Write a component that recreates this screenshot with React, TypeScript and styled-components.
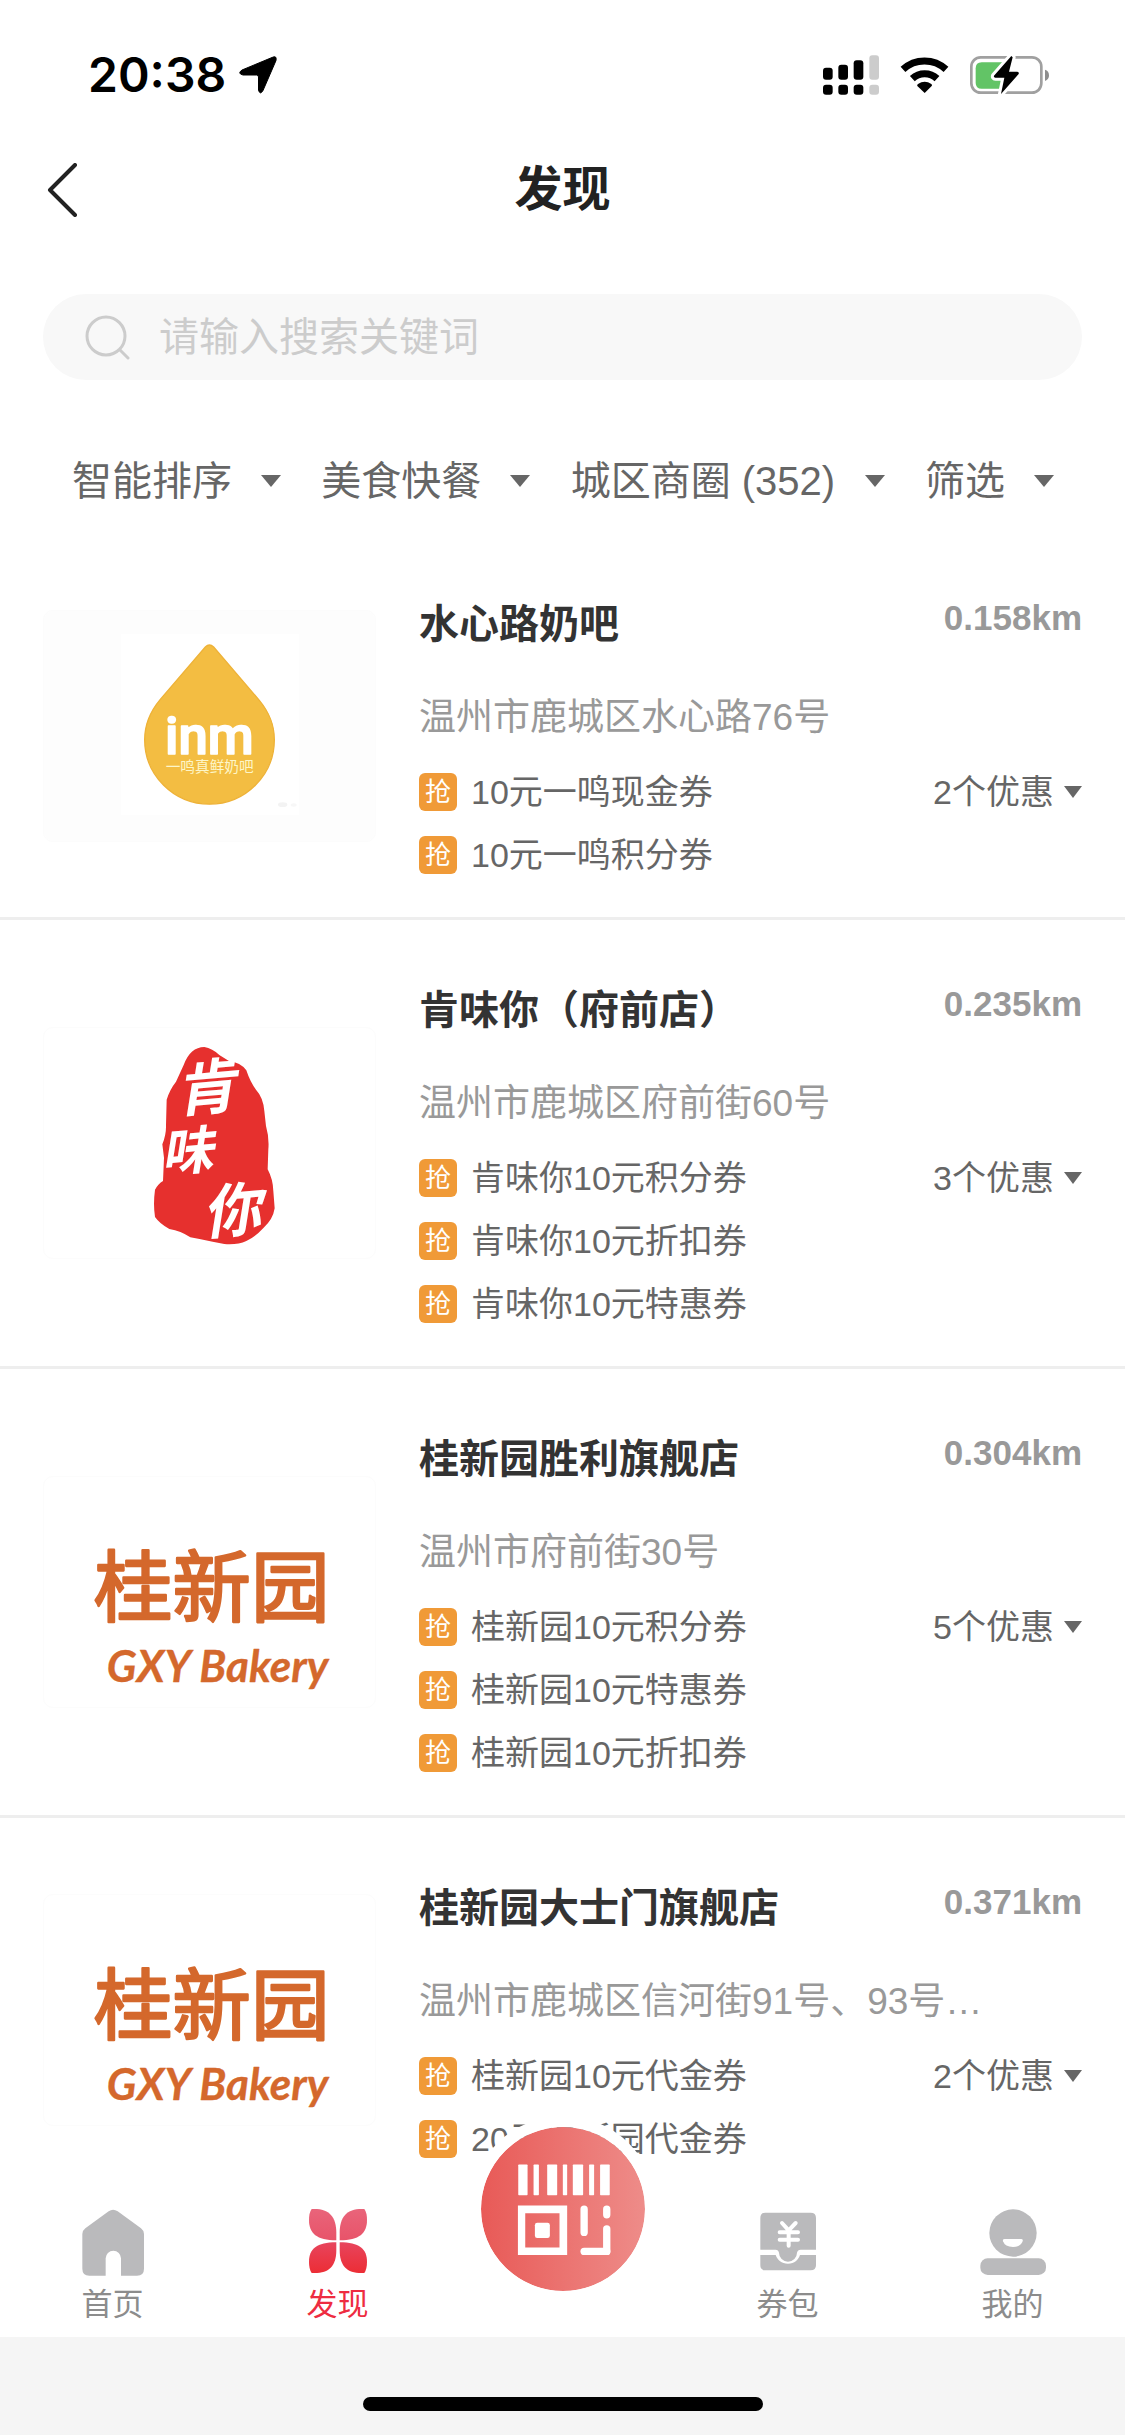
import React, { useState } from "react";
import styled, { createGlobalStyle } from "styled-components";

const sans = `"Liberation Sans", "Noto Sans CJK SC", sans-serif`;

const GlobalStyle = createGlobalStyle`
  * { box-sizing: border-box; }
  body { margin: 0; background: #fff; font-family: ${sans}; color: #666; }
  button, input, select { font: inherit; color: inherit; border: 0; padding: 0; margin: 0; background: none; }
  ul { list-style: none; margin: 0; padding: 0; }
  h1, h2, p { margin: 0; }
  svg { display: block; flex: none; }
`;

const Page = styled.div`
  display: flex;
  flex-direction: column;
  height: 100vh;
  overflow: hidden;
  background: #fff;
`;

const StatusBar = styled.div`
  display: flex;
  align-items: center;
  justify-content: space-between;
  height: 132px;
  flex: none;
  padding: 18px 75px 0 88px;
  color: #000;
`;

const StatusGroup = styled.div<{ $gap: number }>`
  display: flex;
  align-items: center;
  gap: ${(p) => p.$gap}px;
`;

const Clock = styled.span`
  font: 600 48px/56px Inter, sans-serif;
`;

const NavBar = styled.header`
  display: grid;
  grid-template-columns: 80px 1fr 80px;
  align-items: center;
  height: 116px;
  flex: none;
  padding: 0 39px;
`;

const BackButton = styled.button`
  display: flex;
  padding: 8px;
  width: 48px;
`;

const PageTitle = styled.h1`
  font-size: 48px;
  line-height: 64px;
  font-weight: 700;
  text-align: center;
  color: #222;
`;

const SearchBox = styled.label`
  display: flex;
  align-items: center;
  gap: 28px;
  flex: none;
  height: 86px;
  margin: 46px 43px 48px;
  padding: 0 42px;
  border-radius: 43px;
  background: #f8f8f8;
`;

const SearchInput = styled.input`
  flex: 1;
  min-width: 0;
  font-size: 40px;
  line-height: 60px;
  outline: 0;
  &::placeholder { color: #ccc; opacity: 1; }
`;

const FilterBar = styled.div`
  display: flex;
  align-items: center;
  justify-content: space-between;
  flex: none;
  height: 106px;
  padding: 0 71px 0 72px;
`;

const Filter = styled.label`
  display: flex;
  align-items: center;
  gap: 29px;
`;

const FilterSelect = styled.select`
  appearance: none;
  font-size: 40px;
  line-height: 60px;
  outline: 0;
`;

const StoreList = styled.ul`
  flex: 1;
  min-height: 0;
  overflow: hidden;
`;

const StoreRow = styled.li`
  display: flex;
  align-items: center;
  gap: 43px;
  padding: 60px 43px 38px;
  border-bottom: 3px solid #eee;
`;

const Thumb = styled.div`
  flex: none;
  width: 333px;
  height: 232px;
  margin: -20px 0 2px;
  border: 1px solid #fcfcfc;
  border-radius: 10px;
  overflow: hidden;
`;

const StoreInfo = styled.div`
  flex: 1;
  min-width: 0;
`;

const StoreHead = styled.div`
  display: flex;
  justify-content: space-between;
`;

const StoreName = styled.h2`
  font-size: 40px;
  line-height: 60px;
  font-weight: 700;
  color: #333;
`;

const Distance = styled.span`
  font-size: 35px;
  line-height: 48px;
  font-weight: 700;
  color: #999;
`;

const Address = styled.p`
  margin-top: 36px;
  font-size: 37px;
  line-height: 56px;
  color: #999;
  white-space: nowrap;
  overflow: hidden;
  text-overflow: ellipsis;
`;

const Offers = styled.div`
  display: flex;
  align-items: flex-start;
  justify-content: space-between;
  margin-top: 22px;
`;

const CouponList = styled.ul`
  display: grid;
  gap: 15px;
`;

const Coupon = styled.li`
  display: flex;
  align-items: center;
  gap: 14px;
  font-size: 34px;
  line-height: 48px;
`;

const Badge = styled.span`
  display: flex;
  align-items: center;
  justify-content: center;
  width: 38px;
  height: 38px;
  border-radius: 6px;
  background: #f09a37;
  color: #fff;
  font-size: 26px;
  line-height: 36px;
`;

const MoreButton = styled.button`
  display: flex;
  align-items: center;
  gap: 10px;
  font-size: 34px;
  line-height: 48px;
`;

const TabBar = styled.nav`
  display: grid;
  grid-template-columns: repeat(5, 1fr);
  justify-items: center;
  flex: none;
  height: 147px;
  background: #fff;
`;

const Tab = styled.a<{ $active?: boolean }>`
  display: flex;
  flex-direction: column;
  align-items: center;
  gap: 8px;
  padding-top: 17px;
  font-size: 31px;
  line-height: 36px;
  text-decoration: none;
  color: ${(p) => (p.$active ? "#ee2c41" : "#8c8c8c")};
`;

const ScanButton = styled.button`
  display: flex;
  position: relative;
  width: 186px;
  height: 186px;
  margin-top: -74px;
  border: 11px solid #fff;
  border-radius: 50%;
  background: linear-gradient(90deg, #e85a57, #ee8c89) padding-box;
`;

const HomeArea = styled.div`
  display: flex;
  justify-content: center;
  flex: none;
  height: 98px;
  padding-top: 60px;
  background: #f5f5f5;
`;

const HomeIndicator = styled.div`
  width: 400px;
  height: 14px;
  border-radius: 7px;
  background: #000;
`;

const Caret = ({ w = 20 }: { w?: number }) => (
  <svg width={w} height="12" viewBox="0 0 20 12" preserveAspectRatio="none" aria-hidden="true">
    <path d="M0 0H20L10 12Z" fill="#666" />
  </svg>
);

const DropLogo = () => (
  <svg width="333" height="232" viewBox="129 150 999 696" role="img" aria-label="inm">
    <rect x="129" y="150" width="999" height="696" fill="#fdfdfd" />
    <rect x="360" y="218" width="534" height="545" fill="#fff" />
    <path
      d="M613 258Q625 246 638 258L775 418C806 456 820 490 820 536A194 193 0 0 1 431 536C431 490 447 452 478 415Z"
      fill="#f3bd42" stroke="#eeb238" strokeWidth="4"
    />
    <text textAnchor="middle" fill="#fff">
      <tspan x="625" y="578" fontFamily="Roboto, sans-serif" fontWeight="500" fontSize="158" stroke="#fff" strokeWidth="5" strokeLinejoin="round">inm</tspan>
      <tspan x="626" y="634" fontFamily='"Noto Sans CJK SC", sans-serif' fontSize="44" fill="#fdf6c8">一鸣真鲜奶吧</tspan>
    </text>
    <ellipse cx="845" cy="731" rx="14" ry="7" fill="#f3f3f3" />
    <ellipse cx="878" cy="732" rx="9" ry="5" fill="#f7f7f7" />
  </svg>
);

const SealLogo = () => (
  <svg width="333" height="232" viewBox="-171 81 999 696" role="img" aria-label="肯味你">
    <path
      d="M310 138Q334 142 355 162L385 181Q418 184 436 208Q448 244 465 266Q487 290 490 330L495 375Q505 410 502 445L500 505Q516 535 517 570L521 622Q516 655 488 680Q462 708 436 720Q410 732 370 729L335 722Q300 715 268 709Q240 690 205 684Q176 668 162 648Q156 610 162 566Q172 548 186 540L189 470L184 430Q196 400 195 372L197 296Q206 266 225 242L248 192Q268 138 310 138Z"
      fill="#e6302e"
    />
    <g fontFamily='"Noto Sans CJK SC", sans-serif' fontWeight="700" fontStyle="italic" fill="#fff" textAnchor="middle">
      <text x="312" y="324" fontSize="180" transform="rotate(-5 330 250)">肯</text>
      <text x="256" y="506" fontSize="156" transform="rotate(-5 270 440)">味</text>
      <text x="390" y="692" fontSize="176" transform="rotate(-5 400 620)">你</text>
    </g>
  </svg>
);

const BakeryLogo = () => (
  <svg width="333" height="232" viewBox="-51 -12 999 696" role="img" aria-label="桂新园 GXY Bakery">
    <g fill="#d4682c" stroke="#d4682c" strokeLinejoin="round" textAnchor="middle">
      <text x="452" y="406" fontFamily='"Noto Sans CJK SC", sans-serif' fontSize="236" strokeWidth="7">桂新园</text>
      <text x="470" y="604" fontFamily="Lato, sans-serif" fontStyle="italic" fontWeight="700" fontSize="132">GXY Bakery</text>
    </g>
  </svg>
);

type Store = { name: string; km: string; address: string; coupons: string[]; total: number; logo: () => React.ReactElement };

const stores: Store[] = [
  { name: "水心路奶吧", km: "0.158km", address: "温州市鹿城区水心路76号", coupons: ["10元一鸣现金券", "10元一鸣积分券"], total: 2, logo: DropLogo },
  { name: "肯味你（府前店）", km: "0.235km", address: "温州市鹿城区府前街60号", coupons: ["肯味你10元积分券", "肯味你10元折扣券", "肯味你10元特惠券"], total: 3, logo: SealLogo },
  { name: "桂新园胜利旗舰店", km: "0.304km", address: "温州市府前街30号", coupons: ["桂新园10元积分券", "桂新园10元特惠券", "桂新园10元折扣券"], total: 5, logo: BakeryLogo },
  { name: "桂新园大士门旗舰店", km: "0.371km", address: "温州市鹿城区信河街91号、93号…", coupons: ["桂新园10元代金券", "20元桂新园代金券"], total: 2, logo: BakeryLogo },
];

const filters = [
  { label: "排序", value: "智能排序" },
  { label: "分类", value: "美食快餐" },
  { label: "商圈", value: "城区商圈 (352)" },
  { label: "更多条件", value: "筛选" },
];

const HomeIcon = () => (
  <svg width="72" height="72" viewBox="50 51 216 216" aria-hidden="true">
    <path d="M145 64Q158 54 172 64L242 115Q251 122 251 132V236Q251 257 230 257H182V205A23 23 0 0 0 136 205V257H87Q66 257 66 236V132Q66 122 75 115Z" fill="#bababc" />
  </svg>
);

const DiscoverIcon = () => (
  <svg width="72" height="72" viewBox="726 51 216 216" aria-hidden="true">
    <defs>
      <linearGradient id="petals" gradientUnits="userSpaceOnUse" x1="0" y1="57" x2="0" y2="250">
        <stop offset="0" stopColor="#e9647a" />
        <stop offset="0.48" stopColor="#e8546a" />
        <stop offset="0.55" stopColor="#e8435a" />
        <stop offset="1" stopColor="#ec2d35" />
      </linearGradient>
    </defs>
    <g fill="url(#petals)">
      <path d="M755 57C805 54 829 78 829 128V151C770 151 747 130 747 90Q747 68 755 57Z" />
      <path d="M913 57C863 54 839 78 839 128V151C898 151 921 130 921 90Q921 68 913 57Z" />
      <path d="M755 249C805 252 829 230 829 180V157C770 157 747 177 747 216Q747 238 755 249Z" />
      <path d="M913 249C863 252 839 230 839 180V157C898 157 921 177 921 216Q921 238 913 249Z" />
    </g>
  </svg>
);

const WalletIcon = () => (
  <svg width="72" height="72" viewBox="66 51 216 216" aria-hidden="true">
    <path d="M106 68H242Q258 68 258 84V179H212Q203 179 201 188A27 27 0 0 1 147 188Q145 179 137 179H91V84Q91 68 106 68Z" fill="#bababc" />
    <path d="M91 195H137C143 211 154 221 174 221S204 211 210 195H258V226Q258 241 242 241H106Q91 241 91 226Z" fill="#bababc" />
    <path d="M156 99L176 121L197 99M176 121V167M149 127H204M149 149H204" fill="none" stroke="#fff" strokeWidth="12" strokeLinecap="round" strokeLinejoin="round" />
  </svg>
);

const ProfileIcon = () => (
  <svg width="72" height="72" viewBox="741 51 216 216" aria-hidden="true">
    <circle cx="849" cy="129" r="71" fill="#bababc" />
    <rect x="751" y="205" width="197" height="50" rx="22" fill="#bababc" />
    <path d="M824 147H873Q880 147 878 154Q872 171 849 171Q825 171 819 154Q817 147 824 147Z" fill="#fff" />
  </svg>
);

const ScanIcon = () => (
  <svg width="164" height="164" viewBox="125 140 493 493" aria-hidden="true">
    <g fill="#fff">
      <rect x="237" y="253" width="28" height="92" rx="2" />
      <rect x="283" y="253" width="16" height="92" rx="2" />
      <rect x="324" y="253" width="30" height="92" rx="2" />
      <rect x="371" y="253" width="13" height="92" rx="2" />
      <rect x="401" y="253" width="31" height="92" rx="2" />
      <rect x="450" y="253" width="15" height="92" rx="2" />
      <rect x="483" y="253" width="29" height="92" rx="2" />
      <path fillRule="evenodd" d="M236 376H384V525H236ZM258 399V502H361V399Z" />
      <rect x="287" y="428" width="45" height="46" rx="7" />
    </g>
    <g fill="none" stroke="#fff" strokeWidth="22" strokeLinecap="round" strokeLinejoin="round">
      <path d="M435 387V457M503 387V404M503 446V514" />
      <path d="M435 514H503" />
    </g>
  </svg>
);

export default function App() {
  const [query, setQuery] = useState("");
  return (
    <Page>
      <GlobalStyle />
      <StatusBar>
        <StatusGroup $gap={13}>
          <Clock>20:38</Clock>
          <svg width="38" height="38" viewBox="0 0 38 38" aria-hidden="true">
            <path d="M33 1.500Q38 -1 37 4.500L24 34.500Q21 39.500 19.500 34V21Q19.500 19 17.500 19H4Q-2 17.500 3 14Z" fill="#000" stroke="#000" strokeWidth="1" strokeLinejoin="round" />
          </svg>
        </StatusGroup>
        <StatusGroup $gap={21}>
          <svg width="56" height="40" viewBox="69 73 168 120" aria-hidden="true">
            <rect x="69" y="111" width="29" height="36" rx="9" />
            <rect x="115" y="102" width="29" height="45" rx="9" />
            <rect x="161" y="89" width="29" height="58" rx="9" />
            <rect x="208" y="74" width="29" height="73" rx="9" fill="#ccc" />
            <rect x="69" y="162" width="29" height="30" rx="9" />
            <rect x="115" y="162" width="29" height="30" rx="9" />
            <rect x="161" y="162" width="29" height="30" rx="9" />
            <rect x="208" y="162" width="29" height="30" rx="9" fill="#ccc" />
          </svg>
          <svg width="49" height="40" viewBox="300 73 147 120" aria-hidden="true">
            <path d="M374 187L352 166Q350 163 354 160Q374 146 394 160Q398 163 395 166Z" />
            <path d="M309 116A95 95 0 0 1 438 116M337 144A54 54 0 0 1 411 144" fill="none" stroke="#000" strokeWidth="21" />
          </svg>
          <svg width="80" height="40" viewBox="510 73 240 120" aria-hidden="true">
            <rect x="514" y="80" width="210" height="106" rx="28" fill="#fff" stroke="#a0a0a0" strokeWidth="8" />
            <path d="M735 117Q747 121 747 134T735 151Z" fill="#8e8e8e" />
            <path d="M545 95H622V174H545Q527 174 527 156V113Q527 95 545 95Z" fill="#62c466" />
            <path d="M634 76L582 135Q580 141 586 141H613L603 190L656 130Q658 124 652 123H627L638 80Z" fill="#000" stroke="#fff" strokeWidth="18" strokeLinejoin="round" paintOrder="stroke" />
          </svg>
        </StatusGroup>
      </StatusBar>

      <NavBar>
        <BackButton type="button" aria-label="返回">
          <svg width="32" height="54" viewBox="0 0 32 54" aria-hidden="true">
            <path d="M28 2L3 27L28 52" fill="none" stroke="#222" strokeWidth="4" strokeLinecap="round" strokeLinejoin="round" />
          </svg>
        </BackButton>
        <PageTitle>发现</PageTitle>
      </NavBar>

      <SearchBox>
        <svg width="46" height="46" viewBox="0 0 46 46" fill="none" stroke="#ccc" strokeWidth="3" strokeLinecap="round" aria-hidden="true">
          <circle cx="21" cy="22" r="19" />
          <path d="M35 36L43 44" />
        </svg>
        <SearchInput type="text" aria-label="搜索" placeholder="请输入搜索关键词" value={query} onChange={(e) => setQuery(e.target.value)} />
      </SearchBox>

      <FilterBar>
        {filters.map((f) => (
          <Filter key={f.value}>
            <FilterSelect aria-label={f.label} defaultValue={f.value}>
              <option>{f.value}</option>
            </FilterSelect>
            <Caret />
          </Filter>
        ))}
      </FilterBar>

      <StoreList>
        {stores.map((s) => (
          <StoreRow key={s.name}>
            <Thumb><s.logo /></Thumb>
            <StoreInfo>
              <StoreHead>
                <StoreName>{s.name}</StoreName>
                <Distance>{s.km}</Distance>
              </StoreHead>
              <Address>{s.address}</Address>
              <Offers>
                <CouponList>
                  {s.coupons.map((c) => (
                    <Coupon key={c}><Badge>抢</Badge>{c}</Coupon>
                  ))}
                </CouponList>
                <MoreButton type="button">{s.total}个优惠<Caret w={18} /></MoreButton>
              </Offers>
            </StoreInfo>
          </StoreRow>
        ))}
      </StoreList>

      <TabBar>
        <Tab href="#home"><HomeIcon />首页</Tab>
        <Tab href="#discover" $active aria-current="page"><DiscoverIcon />发现</Tab>
        <ScanButton type="button" aria-label="扫码"><ScanIcon /></ScanButton>
        <Tab href="#wallet"><WalletIcon />券包</Tab>
        <Tab href="#me"><ProfileIcon />我的</Tab>
      </TabBar>
      <HomeArea><HomeIndicator /></HomeArea>
    </Page>
  );
}
